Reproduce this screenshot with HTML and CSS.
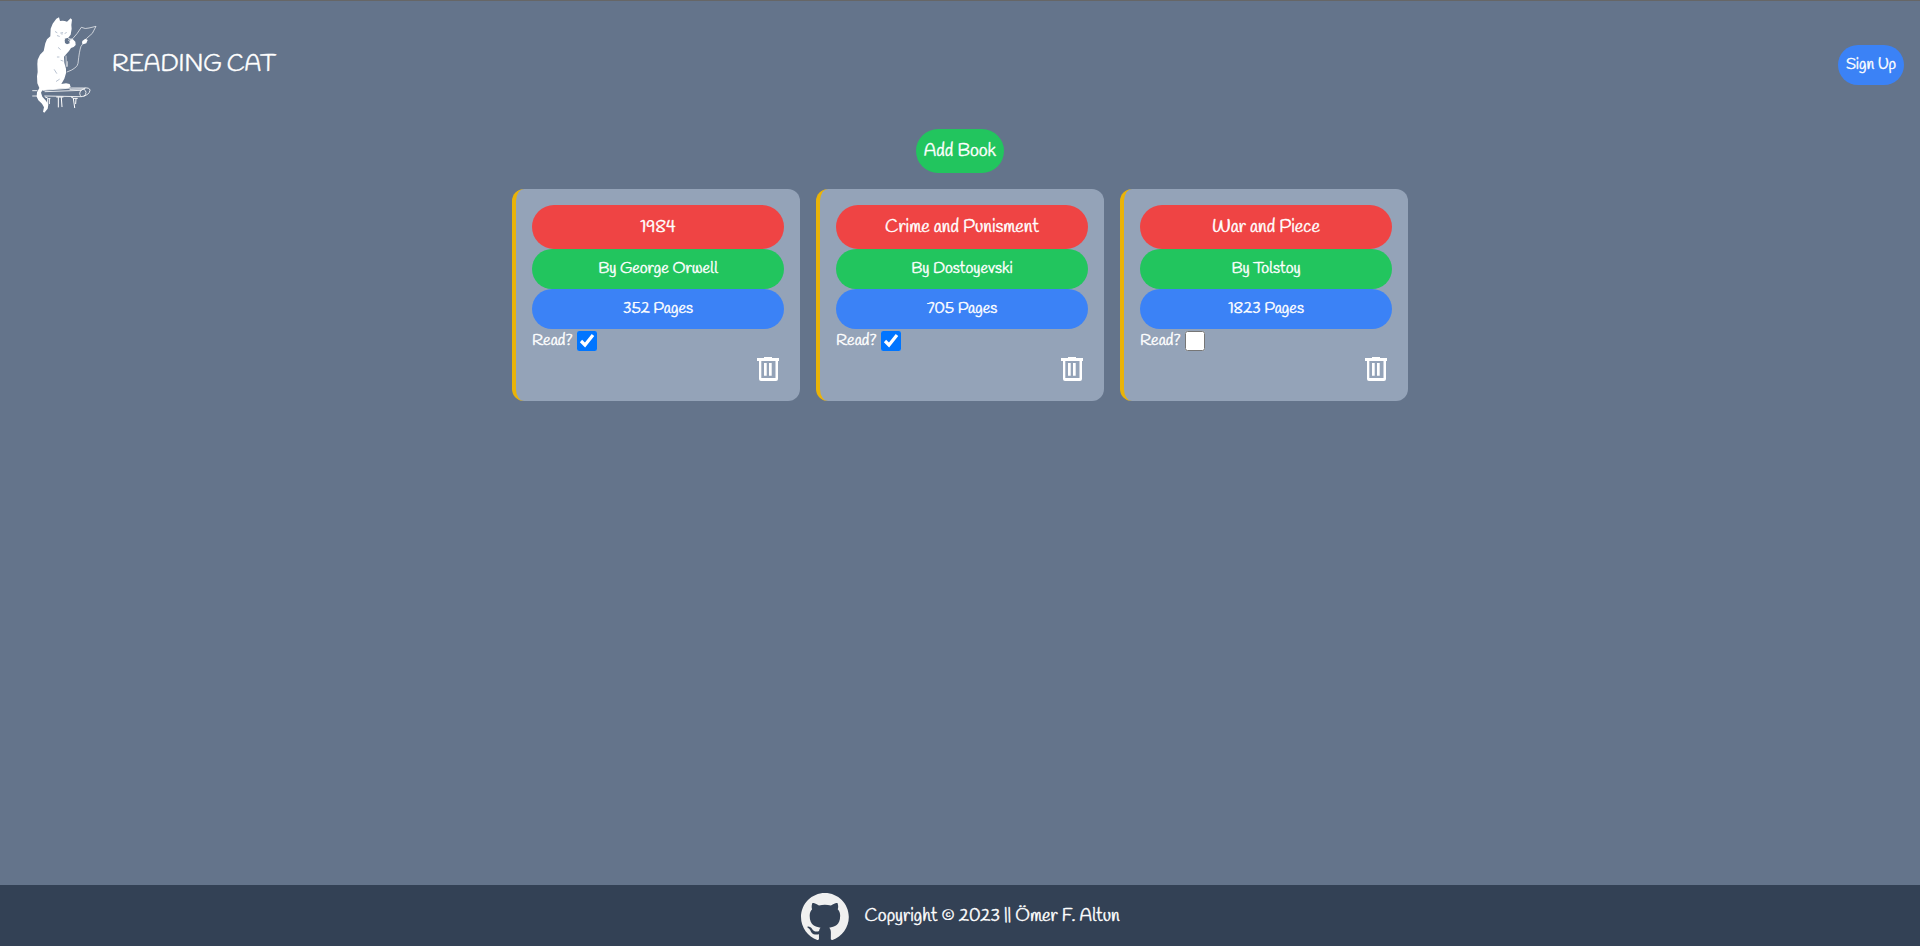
FILE: index.html
```html
<!DOCTYPE html>
<html lang="en">
<head>
<meta charset="utf-8">
<title>Reading Cat</title>
<link rel="stylesheet" href="styles.css">
</head>
<body>
<header class="header">
  <div class="brand">
    <svg class="logo" viewBox="-12 51 288 288" fill="none" stroke="#fff" stroke-width="3" stroke-linecap="round" stroke-linejoin="round">
      <path fill="#fff" stroke="none" d="M91 109L92 86L98 71L109 56L117 52L120 63Q130 60 141 65L152 55L156 59L154 75L155 86L152 104L145 113L134 116L137 123L148 122L158 117L166 125L167 135L161 141L153 144L147 153L137 164L132 170L133 188L138 206L138 220L133 236L124 252L138 250L149 252L152 261L146 264L100 268L67 271L63 278L67 290L78 302L85 314L83 326L73 338L69 335L72 322L66 311L55 301L50 290L51 277L58 264L52 250L51 229L53 216L52 192L53 179L60 164L71 153L76 130L81 118Z"/>
      <path fill="#64748b" stroke="none" d="M134 120l8-3 9 2-3 4 1 7-8 3-6-4z"/>
      <path stroke="#94a3b8" stroke-width="2" d="M106 95l5 3M112 107l6 2M122 99l6-1M125 102h2M135 100l4-2M115 143l6 5M112 171h5M123 181l6 2M103 209l7 11M109 244l9-6"/>
      <path stroke-width="2" d="M145 115l10 3M145 121L158 116L171 101L184 82Q196 88 207 84L228 79Q220 103 200 115L191 128L183 139Q178 152 174 190Q172 205 141 216M138 168L139 199M142 185v14"/>
      <path fill="#fff" stroke="none" d="M187 123l9-7 7 4-4 10-9 3-4-3z"/>
      <path stroke-width="2.5" d="M38 272h13M38 288h14M69 271L154 264H190Q210 262 210 271Q208 286 184 290L74 288M75 275L183 271M150 268L192 267M183 271Q174 282 184 290M183 271L195 265M192 268Q205 276 192 289"/>
      <path stroke-width="3" d="M76 291l10 5h4M83 297v16M88 297v14M110 291h19M115 293v28M124 293l2 27M154 291l7 4h11M160 295l4 28M168 296l-1 15"/>
    </svg>
    <span class="brand-name">READING CAT</span>
  </div>
  <button class="signup">Sign Up</button>
</header>
<main class="main">
  <button class="add">Add Book</button>
  <div class="cards">
    <article class="card">
      <h2 class="pill title">1984</h2>
      <p class="pill author">By George Orwell</p>
      <p class="pill pages">352 Pages</p>
      <label class="read">Read?<input class="check" type="checkbox" checked></label>
      <svg class="trash" viewBox="0 0 32 32"><path fill="#fff" fill-rule="evenodd" d="M5 5h7V4h8v1h7v3h-1v18q0 2-2 2H9q-2 0-2-2V8H5zM9.3 8v17h14.200V8zM12 10h2.700v12.700H12zM17 10h2.700v12.700H17z"/></svg>
    </article>
    <article class="card">
      <h2 class="pill title">Crime and Punisment</h2>
      <p class="pill author">By Dostoyevski</p>
      <p class="pill pages">705 Pages</p>
      <label class="read">Read?<input class="check" type="checkbox" checked></label>
      <svg class="trash" viewBox="0 0 32 32"><path fill="#fff" fill-rule="evenodd" d="M5 5h7V4h8v1h7v3h-1v18q0 2-2 2H9q-2 0-2-2V8H5zM9.3 8v17h14.200V8zM12 10h2.700v12.700H12zM17 10h2.700v12.700H17z"/></svg>
    </article>
    <article class="card">
      <h2 class="pill title">War and Piece</h2>
      <p class="pill author">By Tolstoy</p>
      <p class="pill pages">1823 Pages</p>
      <label class="read">Read?<input class="check" type="checkbox"></label>
      <svg class="trash" viewBox="0 0 32 32"><path fill="#fff" fill-rule="evenodd" d="M5 5h7V4h8v1h7v3h-1v18q0 2-2 2H9q-2 0-2-2V8H5zM9.3 8v17h14.200V8zM12 10h2.700v12.700H12zM17 10h2.700v12.700H17z"/></svg>
    </article>
  </div>
</main>
<footer class="footer">
  <svg class="github" viewBox="0 0 98 96"><path fill="#f0f0f0" fill-rule="evenodd" clip-rule="evenodd" d="M48.854 0C21.839 0 0 22 0 49.217c0 21.756 13.993 40.172 33.405 46.69 2.427.49 3.316-1.059 3.316-2.362 0-1.141-.08-5.052-.08-9.127-13.59 2.934-16.42-5.867-16.42-5.867-2.184-5.704-5.42-7.17-5.42-7.17-4.448-3.015.324-3.015.324-3.015 4.934.326 7.523 5.052 7.523 5.052 4.367 7.496 11.404 5.378 14.235 4.074.404-3.178 1.699-5.378 3.074-6.6-10.839-1.141-22.243-5.378-22.243-24.283 0-5.378 1.94-9.778 5.014-13.2-.485-1.222-2.184-6.275.486-13.038 0 0 4.125-1.304 13.426 5.052a46.97 46.97 0 0 1 12.214-1.63c4.125 0 8.33.571 12.213 1.63 9.302-6.356 13.427-5.052 13.427-5.052 2.67 6.763.97 11.816.485 13.038 3.155 3.422 5.015 7.822 5.015 13.2 0 18.905-11.404 23.06-22.324 24.283 1.78 1.548 3.316 4.481 3.316 9.126 0 6.6-.08 11.897-.08 13.526 0 1.304.89 2.853 3.316 2.364 19.412-6.52 33.405-24.935 33.405-46.691C97.707 22 75.788 0 48.854 0z"/></svg>
  <span class="copy">Copyright © 2023 || Ömer F. Altun</span>
</footer>
</body>
</html>
```
FILE: styles.css
```css
* { box-sizing: border-box; margin: 0; padding: 0; }
body {
  display: flex; flex-direction: column; height: 946px; overflow: hidden;
  border-top: 1px solid #666; background: #64748b; color: #fff;
  font-family: Handlee, Lato, sans-serif; font-size: 16px; line-height: 24px;
  -webkit-text-stroke: 0.4px #fff;
}
button { border: 0; color: inherit; font: inherit; white-space: nowrap; }
.header { display: flex; align-items: center; justify-content: space-between; height: 128px; padding: 16px; }
.brand { display: flex; align-items: center; }
.logo { width: 96px; height: 96px; }
.brand-name { font-size: 24px; line-height: 32px; }
.signup { width: 66px; height: 40px; border-radius: 20px; background: #3b82f6; }
.main { display: flex; flex: 1; flex-direction: column; align-items: center; gap: 16px; }
.add { width: 88px; height: 44px; border-radius: 22px; background: #22c55e; font-size: 18px; line-height: 28px; }
.cards { display: flex; gap: 16px; }
.card { display: flex; flex-direction: column; width: 288px; height: 212px; padding: 16px; border-left: 4px solid #eab308; border-radius: 12px; background: #94a3b8; }
.pill { height: 40px; padding: 8px; border-radius: 20px; text-align: center; font-weight: 400; white-space: nowrap; }
.title { height: 44px; border-radius: 22px; background: #ef4444; font-size: 18px; line-height: 28px; }
.author { background: #22c55e; }
.pages { background: #3b82f6; }
.read { display: flex; align-items: center; gap: 4.5px; height: 24px; }
.check { width: 20px; height: 20px; }
.trash { align-self: flex-end; width: 32px; height: 32px; }
.footer { display: flex; align-items: flex-start; justify-content: center; gap: 16px; height: 61px; padding-top: 8px; background: #334155; }
.github { width: 48px; height: 47px; }
.copy { font-size: 18px; line-height: 46px; white-space: nowrap; }
```
